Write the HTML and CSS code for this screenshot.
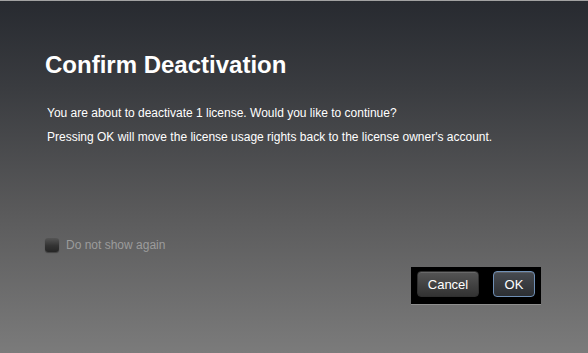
FILE: index.html
```html
<!DOCTYPE html>
<html lang="en">
<head>
  <meta charset="UTF-8" />
  <title>Confirm Deactivation</title>
  <link rel="stylesheet" href="styles.css">
</head>
<body>

<div class="dialog">
  <h1>Confirm Deactivation</h1>

  <div class="message">
    <p>You are about to deactivate 1 license. Would you like to continue?</p>
    <p>Pressing OK will move the license usage rights back to the license owner's account.</p>
  </div>

  <label class="check-row">
    <span class="checkbox"></span>
    <span class="check-label">Do not show again</span>
  </label>

  <div class="button-wrapper">
    <div class="button-bar">
      <button class="btn">Cancel</button>
      <button class="btn btn-ok">OK</button>
    </div>
  </div>
</div>

</body>
</html>
```

FILE: styles.css
```css
:root {
  --text: #ffffff;
  --muted: #9c9c9c;
  --focus: #6f8fb5;
}

* {
  margin: 0;
  padding: 0;
  box-sizing: border-box;
}

html, body {
  height: 100%;
  overflow: hidden;
}

body {
  font-family: 'Liberation Sans', Arial, sans-serif;
  color: var(--text);
  background: linear-gradient(180deg, #272a30 0%, #3a3c40 25%, #5a5a5b 60%, #7b7b7b 100%);
  border-top: 1px solid #a2a2a2;
}

.dialog {
  padding: 50px 47px 0 45px;
}

h1 {
  font-size: 24px;
  font-weight: bold;
  line-height: 28px;
  margin-bottom: 22px;
}

.message {
  padding-left: 2px;
}

.message p {
  font-size: 12px;
  line-height: 24px;
}

.check-row {
  display: flex;
  align-items: center;
  gap: 7px;
  height: 14px;
  margin-top: 89px;
}

.checkbox {
  width: 14px;
  height: 14px;
  border-radius: 3px;
  background: linear-gradient(180deg, #555 0%, #333 55%, #262626 100%);
  box-shadow: 0 1px 1px rgba(0, 0, 0, 0.35);
}

.check-label {
  font-size: 12px;
  color: var(--muted);
}

.button-wrapper {
  display: flex;
  justify-content: flex-end;
  margin-top: 15px;
}

.button-bar {
  display: flex;
  gap: 14px;
  background: #000;
  padding: 4px 6px 7px 6px;
  border-bottom: 1px solid #8e8e8e;
}

.btn {
  height: 26px;
  width: 62px;
  font-family: inherit;
  font-size: 13px;
  color: var(--text);
  border: 1px solid #2f2f2f;
  border-radius: 4px;
  background: linear-gradient(180deg, #555 0%, #434343 50%, #333 100%);
  box-shadow: inset 0 1px 0 rgba(255, 255, 255, 0.12);
}

.btn-ok {
  width: 42px;
  border-color: var(--focus);
  background: linear-gradient(180deg, #474b51 0%, #393c41 50%, #2c2f33 100%);
}
```
